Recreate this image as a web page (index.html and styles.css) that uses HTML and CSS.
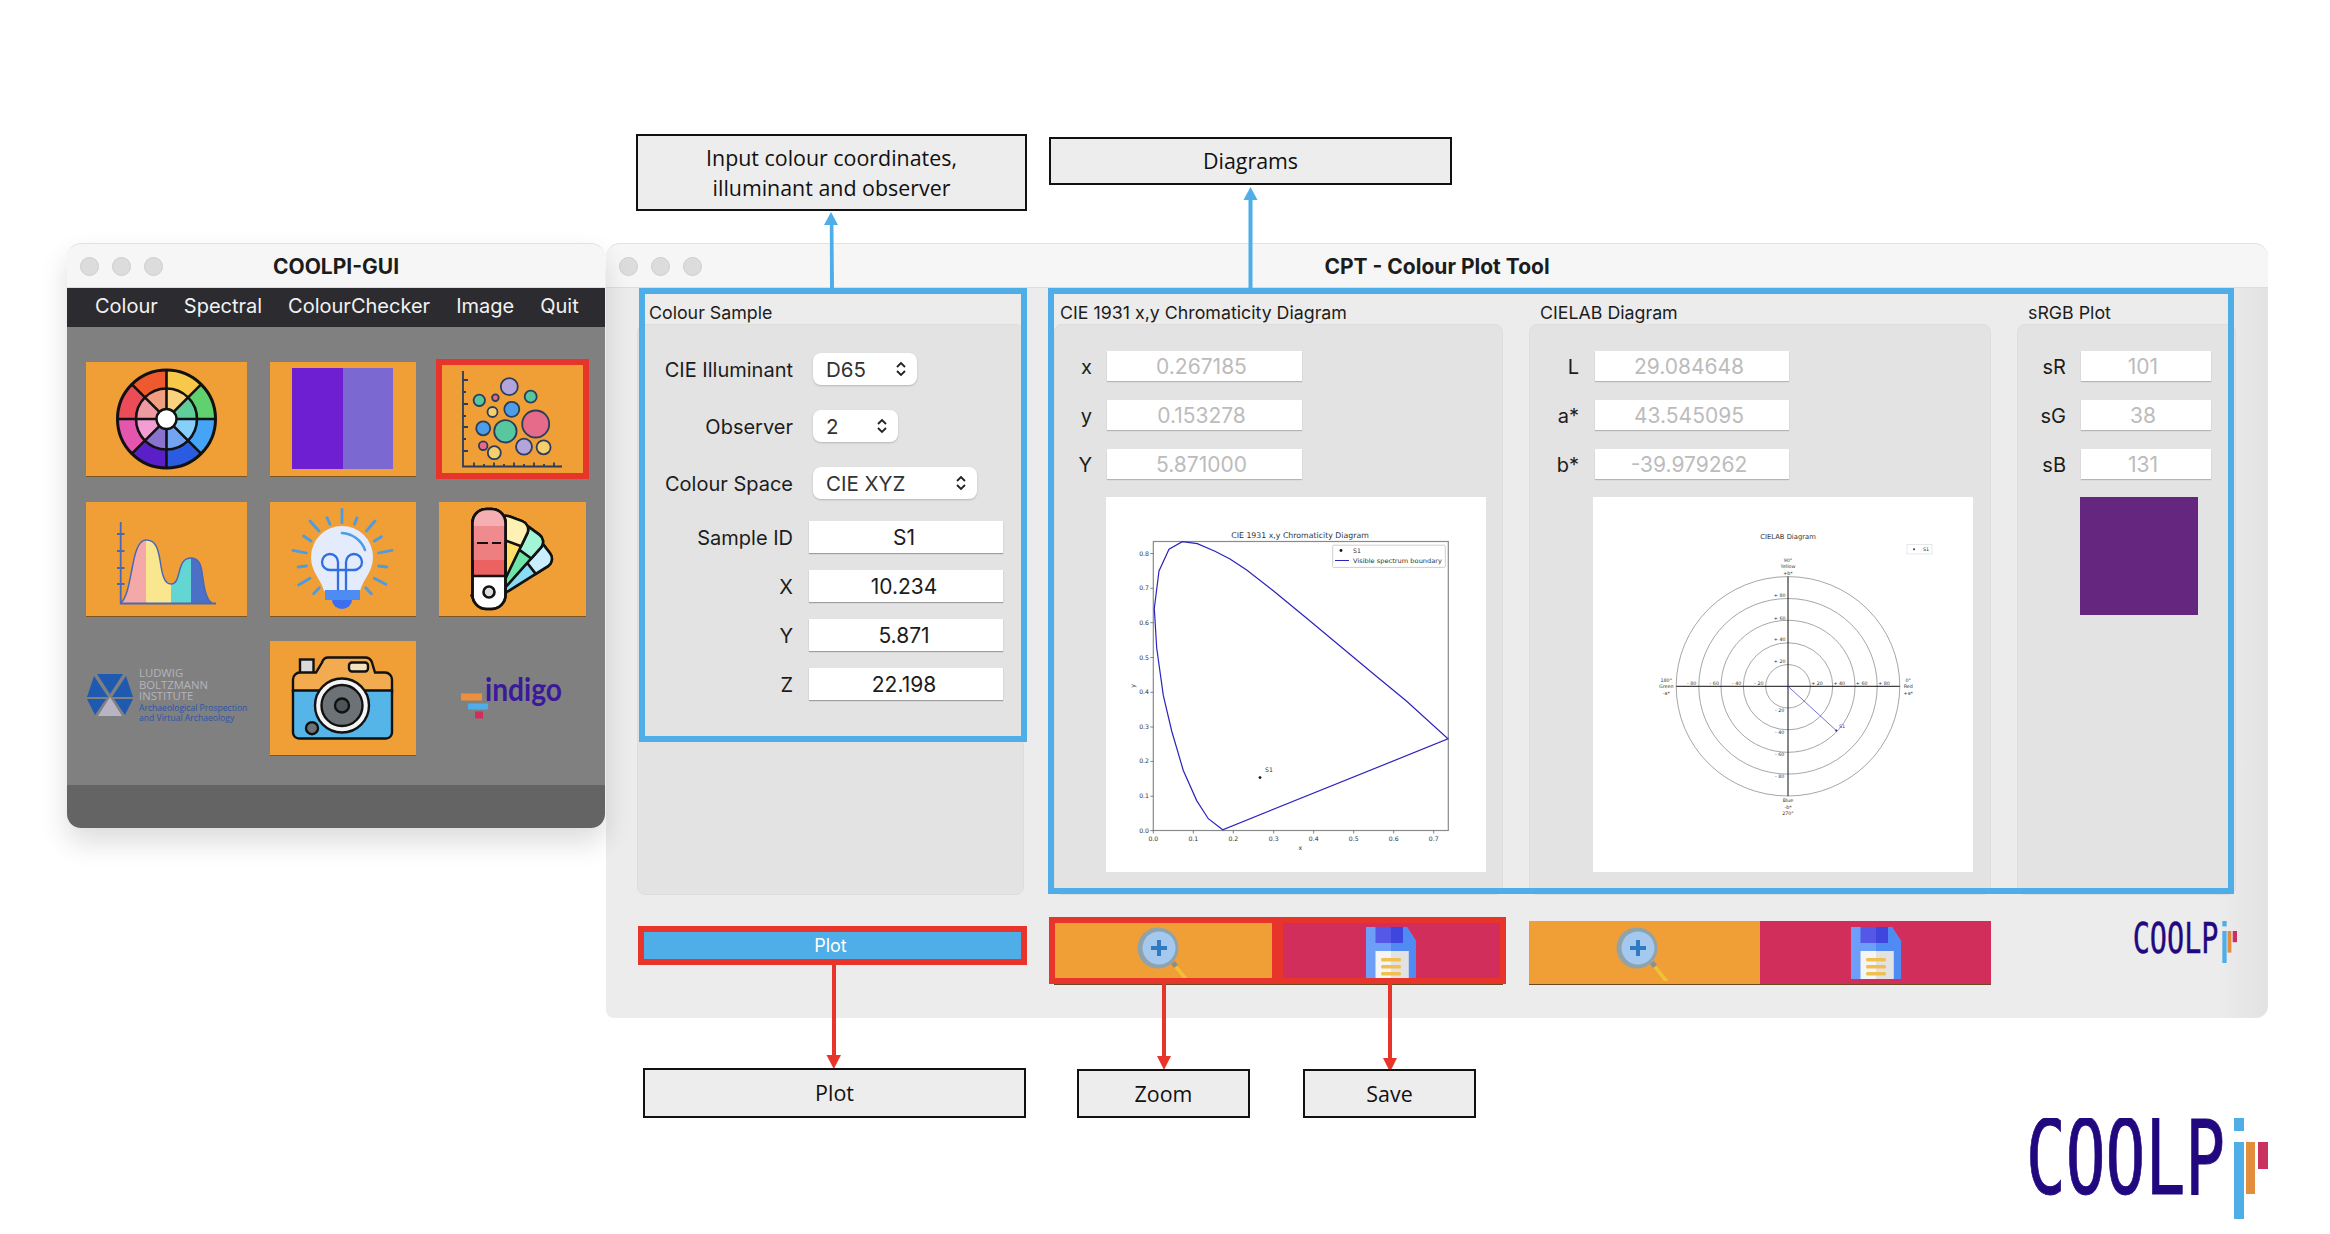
FILE: index.html
```html
<!DOCTYPE html>
<html lang="en">
<head>
  <meta charset="UTF-8">
  <title>COOLPI-GUI - Colour Plot Tool</title>
  <link rel="stylesheet" href="styles.css">
</head>
<body>
  <svg class="defs" width="0" height="0">
    <defs>
      <symbol id="magnifier" viewBox="0 0 60 56">
        <path d="M37 41l3-2 13 16a2.500 2.500 0 0 1-4 1z" fill="#f2c037"/>
        <path d="M35 39l4-3 3 4-4 3z" fill="#8a8f8f"/>
        <circle cx="22" cy="23" r="20.500" fill="#8fa3ad"/>
        <circle cx="23" cy="23" r="16.500" fill="#a5c8ef"/>
        <path d="M21 15h4v6h6v4h-6v6h-4v-6h-6v-4h6z" fill="#2f7ac0"/>
      </symbol>
      <symbol id="floppy" viewBox="0 0 50 52">
        <path d="M0 0h41l9 14v38H0z" fill="#6d9ff8"/>
        <path d="M25 0h16l9 14v38H25z" fill="#4f8bf3"/>
        <rect x="9.500" width="27.500" height="16" fill="#5557e6"/>
        <rect x="25" width="12" height="16" fill="#3f46dd"/>
        <rect x="9.500" y="24" width="33" height="28" fill="#f5f5f5"/>
        <rect x="25" y="24" width="17.500" height="28" fill="#e2e2e2"/>
        <rect x="15" y="31" width="20" height="3.500" rx="1.500" fill="#efc04f"/>
        <rect x="15" y="38" width="20" height="3.500" rx="1.500" fill="#efc04f"/>
        <rect x="15" y="45" width="20" height="3.500" rx="1.500" fill="#efc04f"/>
      </symbol>
      <symbol id="coolpi" viewBox="0 0 239 101" preserveAspectRatio="none">
        <text class="logo-word" x="-3" y="76" textLength="199" lengthAdjust="spacingAndGlyphs">COOLP</text>
        <rect x="205" width="10" height="13" fill="#4faee8"/>
        <rect x="205" y="24" width="10" height="77" fill="#4faee8"/>
        <rect x="217" y="24" width="9" height="52" fill="#e38e3c"/>
        <rect x="229" y="24" width="10" height="27" fill="#c9315f"/>
      </symbol>
      <path id="wedge" d="M0 0V-49A49 49 0 0 1 34.600 -34.600Z"/>
      <path id="leaf" d="M43 12h14a9 9 0 0 1 9 9L58 100H42L34 21a9 9 0 0 1 9-9z"/>
      <path id="leaf-top" d="M43 12h14a9 9 0 0 1 9 9l-1.500 15h-29L34 21a9 9 0 0 1 9-9z"/>
    </defs>
  </svg>

  <!-- main launcher window -->
  <section class="window launcher">
    <header class="titlebar">
      <div class="lights"><i></i><i></i><i></i></div>
      <h1>COOLPI-GUI</h1>
    </header>
    <nav class="menubar">
      <span>Colour</span><span>Spectral</span><span>ColourChecker</span><span>Image</span><span>Quit</span>
    </nav>
    <div class="launcher-body">
      <div class="tile">
        <svg viewBox="0 0 161 114">
          <g transform="translate(80.500 57)">
            <use href="#wedge" fill="#f7c84a"/>
            <use href="#wedge" fill="#5fd16f" transform="rotate(45)"/>
            <use href="#wedge" fill="#45a4f5" transform="rotate(90)"/>
            <use href="#wedge" fill="#2a5be0" transform="rotate(135)"/>
            <use href="#wedge" fill="#5a1fc8" transform="rotate(180)"/>
            <use href="#wedge" fill="#e455ad" transform="rotate(225)"/>
            <use href="#wedge" fill="#ec4c58" transform="rotate(270)"/>
            <use href="#wedge" fill="#ee5a2e" transform="rotate(315)"/>
            <g transform="scale(.62)">
              <use href="#wedge" fill="#fad27e"/>
              <use href="#wedge" fill="#5fce9a" transform="rotate(45)"/>
              <use href="#wedge" fill="#85cffa" transform="rotate(90)"/>
              <use href="#wedge" fill="#73a4f4" transform="rotate(135)"/>
              <use href="#wedge" fill="#8a72cf" transform="rotate(180)"/>
              <use href="#wedge" fill="#f29ed2" transform="rotate(225)"/>
              <use href="#wedge" fill="#ef9aa2" transform="rotate(270)"/>
              <use href="#wedge" fill="#f19d80" transform="rotate(315)"/>
            </g>
            <circle r="49" fill="none" stroke="#111" stroke-width="3"/>
            <circle r="30.500" fill="none" stroke="#111" stroke-width="2.600"/>
            <path d="M0-49V49M-49 0H49M-34.600-34.600L34.600 34.600M-34.600 34.600L34.600-34.600" stroke="#111" stroke-width="2.600"/>
            <circle r="10" fill="#fff" stroke="#111" stroke-width="2.400"/>
          </g>
        </svg>
      </div>
      <div class="tile">
        <svg viewBox="0 0 146 114">
          <rect x="22" y="6" width="51" height="101" fill="#6e1fd1"/>
          <rect x="73" y="6" width="50" height="101" fill="#7b68d0"/>
        </svg>
      </div>
      <div class="tile tile-active">
        <svg viewBox="0 0 147 114">
          <g stroke="#2a3d5c" stroke-width="1.800" fill="none">
            <path d="M24 9V104.500H123"/>
            <path d="M24 18h5M24 30h3M24 42h5M24 54h3M24 65h5M24 77h3M24 89h5M35 104.500v-4M45 104.500v-2.500M55 104.500v-4M65 104.500v-2.500M75 104.500v-4M85 104.500v-2.500M95 104.500v-4M105 104.500v-2.500M115 104.500v-4"/>
            <circle cx="96.700" cy="62" r="13.500" fill="#e66a8a"/>
            <circle cx="66.400" cy="69.300" r="11.200" fill="#58c7a0"/>
            <circle cx="70.300" cy="24.700" r="8.500" fill="#b3a4dc"/>
            <circle cx="91.700" cy="34.700" r="6" fill="#58c7a0"/>
            <circle cx="40.300" cy="38.300" r="5.700" fill="#58c7a0"/>
            <circle cx="56.400" cy="35.700" r="3.300" fill="#e66a8a"/>
            <circle cx="72.800" cy="47.300" r="7.500" fill="#4d9ee8"/>
            <circle cx="53.500" cy="50" r="5" fill="#f7d06e"/>
            <circle cx="44.200" cy="66.300" r="7" fill="#4d9ee8"/>
            <circle cx="85" cy="84.700" r="8" fill="#b3a4dc"/>
            <circle cx="104.600" cy="85.300" r="7" fill="#f7d06e"/>
            <circle cx="55.300" cy="90.700" r="6.500" fill="#f7d06e"/>
            <circle cx="44.200" cy="83.700" r="4.300" fill="#e66a8a"/>
          </g>
        </svg>
      </div>
      <div class="tile">
        <svg viewBox="0 0 161 114">
          <defs>
            <clipPath id="peaks"><path d="M34.700 101C42 95 44 75 47 62C50 45 54 38 60 38C70 38 72 47 74 58C76 72 78 82 85 82C92 82 92 72 95 64C97 58 100 56 105 56C112 56 115 62 116 70C118 85 120 98 126 101Z"/></clipPath>
          </defs>
          <g clip-path="url(#peaks)">
            <rect x="30" y="30" width="30" height="75" fill="#f4a9a8"/>
            <rect x="60" y="30" width="25" height="75" fill="#fbe690"/>
            <rect x="85" y="30" width="20" height="75" fill="#63d5d3"/>
            <rect x="105" y="30" width="25" height="75" fill="#4a70c8"/>
          </g>
          <path d="M34.700 101C42 95 44 75 47 62C50 45 54 38 60 38C70 38 72 47 74 58C76 72 78 82 85 82C92 82 92 72 95 64C97 58 100 56 105 56C112 56 115 62 116 70C118 85 120 98 126 101" fill="none" stroke="#4b67b5" stroke-width="1.500"/>
          <path d="M34.700 20V101.500H130M31 32h7.500M31 49h7.500M31 66h7.500M31 82h7.500" fill="none" stroke="#4b67b5" stroke-width="1.800"/>
        </svg>
      </div>
      <div class="tile">
        <svg viewBox="0 0 146 114">
          <path d="M40 19l9 10M57 15.700l3 6.600M87 15.700l-2.400 6.600M105 19l-8.600 10M33.600 34l7.400 5M111.400 34.700l-7.100 4.300M22.900 48.300l13.500 2.700M122 48.300l-13.400 2.700M28.200 65l8.200-1M116.800 65l-8.200-1M28.600 83L40 76.300M115.700 82.300l-11.400-6M43.600 91.700l5.700-6M101.400 91.700l-5.700-6M72 7.300V20.700" stroke="#4d9be0" stroke-width="2.800" stroke-linecap="round"/>
          <path d="M72 24a31 31 0 0 1 31 31c0 15-10 22-13 34H54c-3-12-13-19-13-34a31 31 0 0 1 31-31z" fill="#e4ebfd"/>
          <path d="M72 31a26 26 0 0 1 23 17" fill="none" stroke="#4d9be0" stroke-width="2.500" stroke-linecap="round"/>
          <path d="M68 88V60a8 8 0 1 0-8 8h24a8 8 0 1 0-8-8V88M68 68h8" fill="none" stroke="#2f6fe0" stroke-width="2.300"/>
          <path d="M55 88h35v10H55z" fill="#4d8cf2"/>
          <path d="M62 98h20a10 9 0 0 1-20 0z" fill="#3a6ff0"/>
        </svg>
      </div>
      <div class="tile">
        <svg viewBox="0 0 147 114">
          <g stroke="#111" stroke-width="2.600" stroke-linejoin="round">
            <g transform="rotate(52 50 90) translate(0 6)">
              <use href="#leaf" fill="#8adcf5"/>
              <use href="#leaf-top" fill="#c8eeff"/>
            </g>
            <g transform="rotate(36 50 90) translate(0 2)">
              <use href="#leaf" fill="#6fe6a8"/>
              <use href="#leaf-top" fill="#a3f5d8"/>
            </g>
            <g transform="rotate(20 50 90)">
              <use href="#leaf" fill="#ffe067"/>
              <use href="#leaf-top" fill="#fff0b3"/>
            </g>
            <rect x="33.500" y="7" width="33" height="100" rx="14" fill="#fff"/>
            <path d="M47 7h6a13.500 13.500 0 0 1 13.500 13.500V74h-33V20.500A13.500 13.500 0 0 1 47 7z" fill="#ec6161"/>
            <path d="M47 8h6a12.500 12.500 0 0 1 12.500 12.500V58h-32V20.500A12.500 12.500 0 0 1 47 8z" fill="#ee7f80" stroke="none"/>
            <path d="M47 8h6a12.500 12.500 0 0 1 12.500 12.500V40h-32V20.500A12.500 12.500 0 0 1 47 8z" fill="#ef8a8f" stroke="none"/>
            <path d="M47 8h6a12.500 12.500 0 0 1 12.500 12.500V24h-31V20.500A12.500 12.500 0 0 1 47 8z" fill="#f5afb3" stroke="none"/>
            <path d="M38 41h11M53 41h9" stroke-width="1.800"/>
            <rect x="33.500" y="7" width="33" height="100" rx="14" fill="none"/>
            <circle cx="50" cy="90" r="5.500" fill="#ddd"/>
          </g>
        </svg>
      </div>
      <div class="lbi">
        <svg class="lbi-mark" viewBox="0 0 46 42">
          <path d="M10 0h26l-13 20zM7 2l14 21H0zM39 2L25 23h21zM0 25h19L8 41zM46 25H27l11 16z" fill="#1e5ab0"/>
          <path d="M23 23l12 19H11z" fill="#b9b4c4"/>
        </svg>
        <div class="lbi-text">
          <span class="lbi-name">LUDWIG<br>BOLTZMANN<br>INSTITUTE</span>
          <span class="lbi-sub">Archaeological Prospection<br>and Virtual Archaeology</span>
        </div>
      </div>
      <div class="tile">
        <svg viewBox="0 0 146 113">
          <g stroke="#111" stroke-width="2.400">
            <rect x="30" y="18" width="13.500" height="14" fill="#d9d9d9"/>
            <path d="M23 38a7 7 0 0 1 7-7h16l6-10c1-3 3-5 6-5h37c3 0 6 2 7 5l3 10h10a7 7 0 0 1 7 7v12H23z" fill="#f2ab4f"/>
            <path d="M23 49h99v42a6 6 0 0 1-6 6H29a6 6 0 0 1-6-6z" fill="#55b5e8"/>
            <rect x="79" y="21" width="19" height="9" rx="3" fill="#f4e2bd"/>
            <circle cx="72" cy="64" r="27" fill="#f4f4f4"/>
            <circle cx="72" cy="64" r="20.500" fill="#6c7275"/>
            <circle cx="72" cy="64" r="7" fill="#4e5457"/>
            <circle cx="42" cy="86.700" r="6" fill="#6c7275"/>
          </g>
        </svg>
      </div>
      <div class="indigo">
        <svg viewBox="0 0 147 113">
          <rect x="22" y="52" width="21" height="7" fill="#ef8f3d"/>
          <rect x="29" y="62" width="20" height="6" fill="#4faee8"/>
          <rect x="36" y="70" width="8" height="7" fill="#d12e5c"/>
          <text class="indigo-word" x="46" y="59" textLength="77" lengthAdjust="spacingAndGlyphs">indigo</text>
        </svg>
      </div>
    </div>
    <div class="launcher-foot"></div>
  </section>

  <!-- colour plot tool window -->
  <section class="window plot-tool">
    <header class="titlebar">
      <div class="lights"><i></i><i></i><i></i></div>
      <h1>CPT - Colour Plot Tool</h1>
    </header>
    <div class="tool-grid">
      <h2 class="col-title title-sample">Colour Sample</h2>
      <h2 class="col-title title-xy">CIE 1931 x,y Chromaticity Diagram</h2>
      <h2 class="col-title title-lab">CIELAB Diagram</h2>
      <h2 class="col-title title-rgb">sRGB Plot</h2>

      <div class="group group-sample">
        <div class="row row-select"><label>CIE Illuminant</label><div class="select select-s">D65<svg class="updown" viewBox="0 0 12 18"><path d="M2 7l4-4 4 4M2 11l4 4 4-4"/></svg></div></div>
        <div class="row row-select"><label>Observer</label><div class="select select-xs">2<svg class="updown" viewBox="0 0 12 18"><path d="M2 7l4-4 4 4M2 11l4 4 4-4"/></svg></div></div>
        <div class="row row-select row-last"><label>Colour Space</label><div class="select select-m">CIE XYZ<svg class="updown" viewBox="0 0 12 18"><path d="M2 7l4-4 4 4M2 11l4 4 4-4"/></svg></div></div>
        <div class="row row-input"><label>Sample ID</label><div class="input">S1</div></div>
        <div class="row row-input"><label>X</label><div class="input">10.234</div></div>
        <div class="row row-input"><label>Y</label><div class="input">5.871</div></div>
        <div class="row row-input"><label>Z</label><div class="input">22.198</div></div>
      </div>

      <div class="group group-xy">
        <div class="row row-out"><label>x</label><div class="output">0.267185</div></div>
        <div class="row row-out"><label>y</label><div class="output">0.153278</div></div>
        <div class="row row-out"><label>Y</label><div class="output">5.871000</div></div>
        <svg class="chart" viewBox="0 0 380 375">
          <text class="chart-title" x="194" y="40.500" text-anchor="middle">CIE 1931 x,y Chromaticity Diagram</text>
          <rect x="47.300" y="44.500" width="295" height="289" fill="none" stroke="#8a8a8a" stroke-width="1.200"/>
          <path d="M47.300 333.500v3M87.300 333.500v3M127.300 333.500v3M167.700 333.500v3M207.700 333.500v3M247.700 333.500v3M287.700 333.500v3M327.700 333.500v3M47.300 333.600h-3M47.300 299.200h-3M47.300 264.400h-3M47.300 230h-3M47.300 195.300h-3M47.300 160.500h-3M47.300 125.700h-3M47.300 91.300h-3M47.300 56.500h-3" stroke="#555" stroke-width=".7"/>
          <g class="tick" text-anchor="middle">
            <text x="47.300" y="344">0.0</text><text x="87.300" y="344">0.1</text><text x="127.300" y="344">0.2</text><text x="167.700" y="344">0.3</text><text x="207.700" y="344">0.4</text><text x="247.700" y="344">0.5</text><text x="287.700" y="344">0.6</text><text x="327.700" y="344">0.7</text>
            <text x="194.300" y="353">x</text>
          </g>
          <g class="tick" text-anchor="end">
            <text x="43" y="335.600">0.0</text><text x="43" y="301.200">0.1</text><text x="43" y="266.400">0.2</text><text x="43" y="232">0.3</text><text x="43" y="197.300">0.4</text><text x="43" y="162.500">0.5</text><text x="43" y="127.700">0.6</text><text x="43" y="93.300">0.7</text><text x="43" y="58.500">0.8</text>
          </g>
          <text class="tick" transform="translate(29 189) rotate(-90)" text-anchor="middle">y</text>
          <path d="M116.700 332.800L102.300 321.700 90.700 303.600 77.300 273.500 65.700 234 57.300 198.400 50.700 151 48.300 111.500 53 73.900 63 52.200 76.300 44.700 91.300 46.600 109 54.200 124 62 140.700 73.100 167.300 93.700 200.700 121.300 234 149 267.300 176.700 300.700 204.300 342 241.900Z" fill="none" stroke="#2c22bc" stroke-width="1.200"/>
          <circle cx="154" cy="280.600" r="1.400" fill="#111"/>
          <text class="tick" x="159" y="275">S1</text>
          <rect x="226.700" y="48.200" width="112.600" height="22.200" rx="1" fill="#fff" stroke="#cfcfcf"/>
          <circle cx="235" cy="53.500" r="1.400" fill="#111"/>
          <text class="tick" x="247" y="55.500">S1</text>
          <path d="M229 63.500h14" stroke="#2c22bc"/>
          <text class="tick" x="247" y="65.500" textLength="89" lengthAdjust="spacingAndGlyphs">Visible spectrum boundary</text>
        </svg>
      </div>

      <div class="group group-lab">
        <div class="row row-out"><label>L</label><div class="output">29.084648</div></div>
        <div class="row row-out"><label>a*</label><div class="output">43.545095</div></div>
        <div class="row row-out"><label>b*</label><div class="output">-39.979262</div></div>
        <svg class="chart" viewBox="0 0 380 375">
          <text class="chart-title lab-title" x="195" y="41.500" text-anchor="middle">CIELAB Diagram</text>
          <rect x="314" y="47.400" width="25" height="9.500" fill="#fff" stroke="#ddd" stroke-width=".7"/>
          <circle cx="321" cy="52.200" r="1" fill="#2a2a9a"/>
          <text class="tick-sm" x="330" y="54">S1</text>
          <g fill="none" stroke="#808080" stroke-width=".7">
            <ellipse cx="195" cy="189.300" rx="22.300" ry="21.700"/>
            <ellipse cx="195" cy="189.300" rx="44.700" ry="43.500"/>
            <ellipse cx="195" cy="189.300" rx="67" ry="66"/>
            <ellipse cx="195" cy="189.300" rx="89.200" ry="87.800"/>
            <ellipse cx="195" cy="189.300" rx="111.800" ry="109.700"/>
          </g>
          <path d="M83.200 189.300H306.800M195 79.600V299" stroke="#111" stroke-width="1"/>
          <path d="M195 189.300L243.300 233.600" stroke="#3a36c4" stroke-width=".7"/>
          <circle cx="243.300" cy="233.600" r="1.100" fill="#2a2a9a"/>
          <text class="tick-sm tick-blue" x="246" y="231">S1</text>
          <g class="tick-sm" text-anchor="middle">
            <text x="195" y="64.500">90°</text><text x="195" y="71">Yellow</text><text x="195" y="77.500">+b*</text>
            <text x="195" y="305">Blue</text><text x="195" y="312">-b*</text><text x="195" y="318">270°</text>
            <text x="315.300" y="184.600">0°</text><text x="315.300" y="191.300">Red</text><text x="315.300" y="197.700">+a*</text>
            <text x="73.300" y="184.600">180°</text><text x="73.300" y="191.300">Green</text><text x="73.300" y="197.700">-a*</text>
            <text x="186.700" y="100.400">+ 80</text><text x="186.700" y="122.600">+ 60</text><text x="186.700" y="144.300">+ 40</text><text x="186.700" y="166.400">+ 20</text>
            <text x="186.700" y="215">- 20</text><text x="186.700" y="237">- 40</text><text x="186.700" y="259">- 60</text><text x="186.700" y="281">- 80</text>
            <text x="98.700" y="188">- 80</text><text x="121.300" y="188">- 60</text><text x="143.700" y="188">- 40</text><text x="166" y="188">- 20</text>
            <text x="224" y="188">+ 20</text><text x="246.300" y="188">+ 40</text><text x="268.700" y="188">+ 60</text><text x="291" y="188">+ 80</text>
          </g>
        </svg>
      </div>

      <div class="group group-rgb">
        <div class="row row-out"><label>sR</label><div class="output">101</div></div>
        <div class="row row-out"><label>sG</label><div class="output">38</div></div>
        <div class="row row-out"><label>sB</label><div class="output">131</div></div>
        <div class="swatch"></div>
      </div>

      <button class="plot-btn">Plot</button>
      <div class="btn-pair pair-xy">
        <div class="icon-btn btn-orange"><svg class="icon-zoom"><use href="#magnifier"/></svg></div>
        <div class="icon-btn btn-crimson"><svg class="icon-save"><use href="#floppy"/></svg></div>
      </div>
      <div class="btn-pair pair-lab">
        <div class="icon-btn btn-orange"><svg class="icon-zoom"><use href="#magnifier"/></svg></div>
        <div class="icon-btn btn-crimson"><svg class="icon-save"><use href="#floppy"/></svg></div>
      </div>
      <svg class="logo-small"><use href="#coolpi" width="103" height="42"/></svg>
    </div>
  </section>

  <!-- annotations drawn over the screenshots -->
  <div class="callout callout-input">Input colour coordinates,<br>illuminant and observer</div>
  <div class="callout callout-diagrams">Diagrams</div>
  <div class="callout callout-plot">Plot</div>
  <div class="callout callout-zoom">Zoom</div>
  <div class="callout callout-save">Save</div>
  <div class="frame frame-sample"></div>
  <div class="frame frame-diagrams"></div>
  <div class="frame frame-red frame-zoom"></div>
  <div class="frame frame-red frame-save"></div>
  <svg class="arrows" viewBox="0 0 2330 1234">
    <g fill="#4faee8">
      <path d="M830 288L829.800 224H833.400L834 288Z"/>
      <path d="M824 225H838L831 212Z"/>
      <rect x="1248.500" y="199" width="4" height="89"/>
      <path d="M1243.500 200H1257.500L1250.500 187Z"/>
    </g>
    <g fill="#e8352b">
      <rect x="832" y="965" width="4" height="91"/>
      <path d="M826.500 1055H841L833.800 1069Z"/>
      <rect x="1162" y="984" width="4" height="73"/>
      <path d="M1157 1056H1171L1164 1070Z"/>
      <rect x="1388" y="984" width="4" height="75"/>
      <path d="M1383 1058H1397L1390 1072Z"/>
    </g>
  </svg>
  <svg class="logo-big"><use href="#coolpi" width="239" height="101"/></svg>
</body>
</html>
```

FILE: styles.css
```css
* {
  box-sizing: border-box;
}
body {
  margin: 0;
  width: 2330px;
  height: 1234px;
  position: relative;
  overflow: hidden;
  background-color: white;
  font-family: "Inter", "Liberation Sans", sans-serif;
  color: #1c1c1c;
}
.defs {
  position: absolute;
}
.window {
  position: absolute;
  display: flex;
  flex-direction: column;
  overflow: hidden;
}
.launcher {
  left: 67px;
  top: 243px;
  width: 538px;
  height: 585px;
  border-radius: 14px;
  z-index: 2;
  box-shadow: 0 14px 28px rgba(0, 0, 0, 0.14);
  overflow: visible;
}
.plot-tool {
  left: 606px;
  top: 243px;
  width: 1662px;
  height: 775px;
  border-radius: 14px 14px 12px 8px;
  background: linear-gradient(to right, #ececec 97%, #e2e2e2);
}
.titlebar {
  height: 45px;
  flex: none;
  display: flex;
  align-items: center;
  justify-content: center;
  position: relative;
  background-color: #f6f6f6;
  border-top: 1px solid #e2e2e2;
  border-bottom: 1px solid #dedede;
  border-radius: 14px 14px 0 0;
}
.titlebar h1 {
  margin: 0;
  font-size: 21px;
  font-weight: 700;
  padding-top: 1px;
}
.lights {
  position: absolute;
  left: 13px;
  top: 13px;
  display: flex;
  gap: 13px;
}
.lights i {
  width: 19px;
  height: 19px;
  border-radius: 50%;
  background-color: #dcdcdc;
  border: 1px solid #cdcdcd;
}
.menubar {
  height: 39px;
  flex: none;
  display: flex;
  align-items: center;
  gap: 26px;
  padding: 0 0 3px 28px;
  background-color: #2c2c30;
  color: #f2f2f2;
  font-size: 20px;
}

/* launcher grid */
.launcher-body {
  flex: 1;
  display: grid;
  grid-template-columns: 161px 146px 147px;
  grid-template-rows: 114px 114px 114px;
  column-gap: 23px;
  row-gap: 25.5px;
  padding: 35px 0 0 19px;
  background-color: #808080;
}
.launcher-foot {
  height: 43px;
  flex: none;
  background-color: #646464;
  border-radius: 0 0 14px 14px;
}
.tile {
  background-color: #f09f37;
  box-shadow: 0 1px 0 #7d5520;
}
.tile svg {
  display: block;
  width: 100%;
  height: 100%;
}
.tile-active {
  outline: 6px solid #e8352b;
  outline-offset: -3px;
}
.lbi {
  display: flex;
  align-items: center;
  gap: 6px;
  padding: 0 0 6px 1px;
}
.lbi-mark {
  width: 46px;
  height: 42px;
  flex: none;
}
.lbi-text {
  font-family: "Open Sans", sans-serif;
  white-space: nowrap;
}
.lbi-name {
  display: block;
  font-size: 11.3px;
  line-height: 11.5px;
  color: #b4b4be;
}
.lbi-sub {
  display: block;
  font-size: 8.6px;
  line-height: 10px;
  color: #2a56a8;
  margin-top: 1px;
}
.indigo svg {
  display: block;
  width: 100%;
  height: 100%;
}
.indigo-word {
  font-family: "Lato", sans-serif;
  font-size: 32px;
  font-weight: 700;
  fill: #3a1a9a;
}
.logo-word {
  font-family: "DejaVu Sans Mono", monospace;
  font-size: 104px;
  fill: #22087f;
  stroke: #22087f;
  stroke-width: 1;
}

/* plot tool */
.tool-grid {
  display: grid;
  grid-template-columns: 391px 449px 462px 219px;
  grid-template-rows: 36px 571px 26px 63px;
  column-gap: 26px;
  padding-left: 31px;
}
.col-title {
  margin: 0;
  align-self: end;
  font-size: 17.8px;
  font-weight: 400;
  line-height: 22px;
  white-space: nowrap;
}
.title-sample { grid-area: 1 / 1; padding-left: 12px; }
.title-xy { grid-area: 1 / 2; padding-left: 6px; }
.title-lab { grid-area: 1 / 3; padding-left: 11px; }
.title-rgb { grid-area: 1 / 4; padding-left: 11px; }
.group {
  background-color: #e3e3e3;
  border: 1px solid #dddddd;
  border-radius: 8px;
  padding-top: 26px;
}
.group-sample { grid-area: 2 / 1; margin-right: 4px; padding-top: 28px; }
.group-xy { grid-area: 2 / 2; }
.group-lab { grid-area: 2 / 3; }
.group-rgb { grid-area: 2 / 4; }
.row {
  display: flex;
  align-items: center;
  font-size: 20px;
}
.row label {
  flex: none;
  padding-top: 1px;
  text-align: right;
  white-space: nowrap;
}
.group-sample label { width: 155px; margin-right: 16px; }
.group-xy label { width: 37px; margin-right: 15px; }
.group-lab label { width: 49px; margin-right: 16px; }
.group-rgb label { width: 48px; margin-right: 15px; }
.row-select {
  height: 32px;
  margin-bottom: 25px;
}
.row-last {
  margin-bottom: 22px;
}
.row-input {
  height: 32px;
  margin-bottom: 17px;
}
.row-out {
  height: 30px;
  margin-bottom: 19px;
}
.select {
  margin-left: 4px;
  height: 32px;
  padding-left: 13px;
  display: flex;
  align-items: center;
  justify-content: space-between;
  padding-right: 10px;
  background-color: white;
  border-radius: 8px;
  box-shadow: 0 1px 2px rgba(0, 0, 0, 0.2);
  color: #333;
  font-size: 20.5px;
}
.select-s { width: 104px; }
.select-xs { width: 85px; }
.select-m { width: 164px; }
.updown {
  width: 12px;
  height: 18px;
  fill: none;
  stroke: #222;
  stroke-width: 1.8;
}
.input {
  width: 194px;
  height: 32px;
  line-height: 34px;
  text-align: center;
  font-size: 21px;
  padding-right: 4px;
  background-color: white;
  box-shadow: 0 1px 1px rgba(0, 0, 0, 0.3);
}
.output {
  height: 30px;
  line-height: 32px;
  text-align: center;
  font-size: 21px;
  padding-right: 6px;
  color: #bcbcbc;
  background-color: white;
  box-shadow: 0 1px 1px rgba(0, 0, 0, 0.2);
}
.group-xy .output { width: 195px; }
.group-lab .output { width: 194px; }
.group-rgb .output { width: 130px; }
.chart {
  display: block;
  width: 380px;
  height: 375px;
  margin-top: -1px;
  background-color: white;
}
.group-xy .chart { margin-left: 51px; }
.group-lab .chart { margin-left: 63px; }
.chart text {
  font-family: "DejaVu Sans", sans-serif;
  fill: #333;
}
.chart-title {
  font-size: 7.8px;
}
.lab-title {
  font-size: 6.8px;
}
.tick {
  font-size: 6.2px;
}
.tick-sm {
  font-size: 4.8px;
}
.chart .tick-blue {
  fill: #3a36c4;
}
.swatch {
  width: 118px;
  height: 118px;
  margin: -1px 0 0 62px;
  background-color: #652680;
}
.plot-btn {
  grid-area: 4 / 1;
  margin: 5px 0 0 1px;
  width: 389px;
  height: 39px;
  padding: 0 4px 0 0;
  font-family: inherit;
  font-size: 18px;
  color: white;
  background-color: #4faee8;
  border: 6px solid #e8352b;
}
.btn-pair {
  display: flex;
}
.pair-xy { grid-area: 4 / 2; }
.pair-lab { grid-area: 4 / 3; }
.icon-btn {
  flex: 0 0 50%;
  display: flex;
  align-items: center;
  justify-content: center;
  box-shadow: 0 1px 0 #6a4a20;
}
.btn-orange {
  background-color: #f09f37;
}
.btn-crimson {
  background-color: #d12e5c;
}
.icon-zoom {
  width: 60px;
  height: 56px;
}
.icon-save {
  width: 50px;
  height: 52px;
}
.logo-small {
  grid-area: 4 / 4;
  width: 103px;
  height: 42px;
  margin-left: 117px;
}

/* annotations */
.callout {
  position: absolute;
  z-index: 5;
  display: flex;
  align-items: center;
  justify-content: center;
  text-align: center;
  background-color: #ededed;
  border: 2px solid #111;
  font-family: "Open Sans", sans-serif;
  font-size: 21.4px;
  line-height: 29.5px;
  color: #111;
}
.callout-input { left: 636px; top: 134px; width: 391px; height: 77px; }
.callout-diagrams { left: 1049px; top: 137px; width: 403px; height: 48px; }
.callout-plot { left: 643px; top: 1068px; width: 383px; height: 50px; }
.callout-zoom { left: 1077px; top: 1069px; width: 173px; height: 49px; }
.callout-save { left: 1303px; top: 1069px; width: 173px; height: 49px; }
.frame {
  position: absolute;
  z-index: 4;
  border: 6px solid #4faee8;
}
.frame-sample { left: 639px; top: 288px; width: 388px; height: 454px; }
.frame-diagrams { left: 1048px; top: 288px; width: 1186px; height: 606px; }
.frame-red { border-color: #e8352b; top: 917px; height: 67px; }
.frame-zoom { left: 1049px; width: 229px; }
.frame-save { left: 1277px; width: 229px; }
.arrows {
  position: absolute;
  left: 0;
  top: 0;
  width: 2330px;
  height: 1234px;
  z-index: 3;
  pointer-events: none;
}
.logo-big {
  position: absolute;
  left: 2029px;
  top: 1118px;
  width: 239px;
  height: 101px;
}
```
